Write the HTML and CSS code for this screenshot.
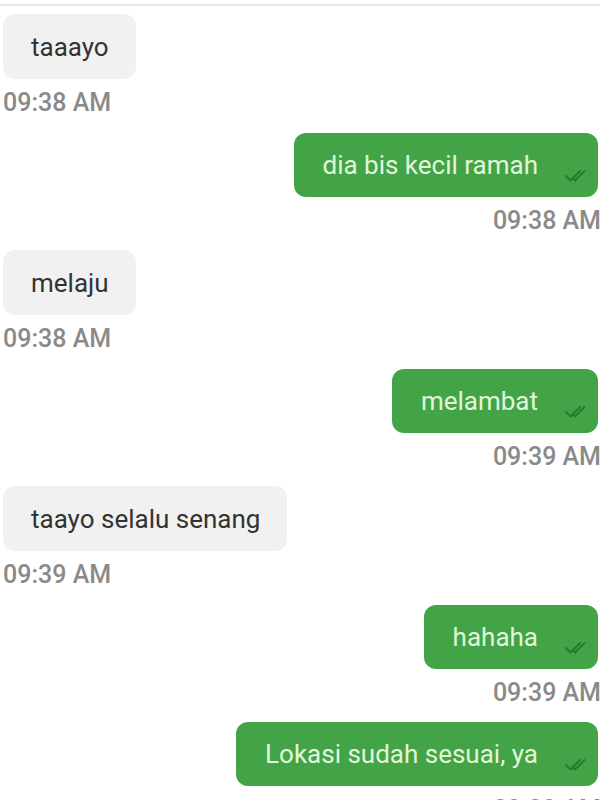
FILE: index.html
```html
<!DOCTYPE html>
<html>
<head>
<meta charset="utf-8">
<link rel="stylesheet" href="styles.css">
</head>
<body>
<div class="topline"></div>
<div class="chat">
  <div class="msg in">
    <div class="bubble">taaayo</div>
    <div class="time">09:38 AM</div>
  </div>
  <div class="msg out">
    <div class="bubble"><span class="text">dia bis kecil ramah</span><svg class="tick" viewBox="0 0 24 18" width="24" height="18"><path d="M1 10 L5.5 14.5 L15 5 M8 12.5 L10 14.5 L19.5 5"/></svg></div>
    <div class="time">09:38 AM</div>
  </div>
  <div class="msg in">
    <div class="bubble">melaju</div>
    <div class="time">09:38 AM</div>
  </div>
  <div class="msg out">
    <div class="bubble"><span class="text">melambat</span><svg class="tick" viewBox="0 0 24 18" width="24" height="18"><path d="M1 10 L5.5 14.5 L15 5 M8 12.5 L10 14.5 L19.5 5"/></svg></div>
    <div class="time">09:39 AM</div>
  </div>
  <div class="msg in">
    <div class="bubble">taayo selalu senang</div>
    <div class="time">09:39 AM</div>
  </div>
  <div class="msg out">
    <div class="bubble"><span class="text">hahaha</span><svg class="tick" viewBox="0 0 24 18" width="24" height="18"><path d="M1 10 L5.5 14.5 L15 5 M8 12.5 L10 14.5 L19.5 5"/></svg></div>
    <div class="time">09:39 AM</div>
  </div>
  <div class="msg out">
    <div class="bubble"><span class="text">Lokasi sudah sesuai, ya</span><svg class="tick" viewBox="0 0 24 18" width="24" height="18"><path d="M1 10 L5.5 14.5 L15 5 M8 12.5 L10 14.5 L19.5 5"/></svg></div>
    <div class="time">09:39 AM</div>
  </div>
</div>
</body>
</html>
```

FILE: styles.css
```css
html, body {
  margin: 0;
  padding: 0;
  background: #ffffff;
  overflow: hidden;
}
body {
  width: 600px;
  height: 800px;
  font-family: Roboto, "Liberation Sans", sans-serif;
}
.topline {
  height: 2px;
  margin-top: 4px;
  background: #e6e6e6;
}
.chat {
  display: flex;
  flex-direction: column;
  padding: 8px 2px 0 3px;
}
.msg {
  display: flex;
  flex-direction: column;
}
.msg.in {
  align-items: flex-start;
  margin-bottom: 15px;
}
.msg.out {
  align-items: flex-end;
  margin-bottom: 14px;
}
.bubble {
  box-sizing: border-box;
  height: 64px;
  display: flex;
  align-items: center;
  font-size: 26px;
  line-height: 30px;
  border-radius: 12px;
}
.msg.in .bubble {
  background: #f1f1f1;
  color: #333333;
  padding: 0 27px 0 28px;
  height: 65px;
}
.msg.out .bubble {
  background: #43a447;
  color: #e2f6d9;
  padding: 0 9px 0 29px;
  gap: 27px;
}
.tick {
  align-self: flex-end;
  margin-bottom: 13px;
  fill: none;
  stroke: #2a702d;
  stroke-width: 1.8;
  stroke-linecap: round;
  stroke-linejoin: round;
  opacity: 0.9;
}
.time {
  margin-top: 9px;
  font-size: 25px;
  line-height: 30px;
  color: #8a8a8a;
  font-weight: 500;
  white-space: nowrap;
}
.msg.out .time {
  margin-right: -3px;
}
```
